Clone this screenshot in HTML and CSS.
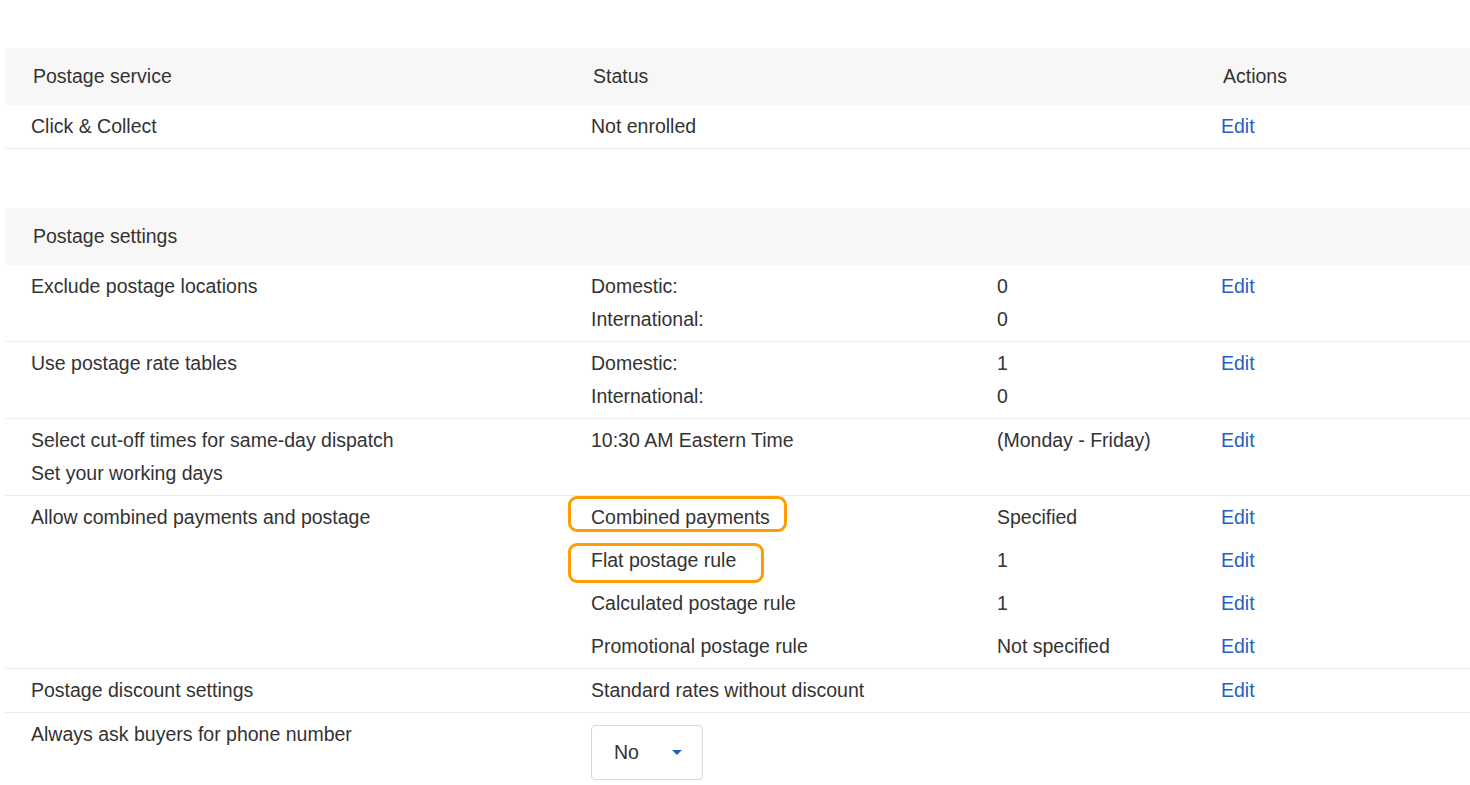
FILE: index.html
```html
<!DOCTYPE html>
<html lang="en">
<head>
<meta charset="utf-8">
<title>Postage</title>
<link rel="stylesheet" href="styles.css">
</head>
<body>
<div class="page">
  <section class="table">
    <div class="head">
      <div class="hcell">Postage service</div>
      <div class="hcell">Status</div>
      <div class="hcell"></div>
      <div class="hcell">Actions</div>
    </div>
    <div class="row">
      <div class="cell">Click &amp; Collect</div>
      <div class="cell">Not enrolled</div>
      <div class="cell"></div>
      <div class="cell"><a class="link" href="#">Edit</a></div>
    </div>
  </section>

  <section class="table second">
    <div class="head">
      <div class="hcell">Postage settings</div>
    </div>
    <div class="row">
      <div class="cell">Exclude postage locations</div>
      <div class="cell"><div>Domestic:</div><div>International:</div></div>
      <div class="cell"><div>0</div><div>0</div></div>
      <div class="cell"><a class="link" href="#">Edit</a></div>
    </div>
    <div class="row">
      <div class="cell">Use postage rate tables</div>
      <div class="cell"><div>Domestic:</div><div>International:</div></div>
      <div class="cell"><div>1</div><div>0</div></div>
      <div class="cell"><a class="link" href="#">Edit</a></div>
    </div>
    <div class="row">
      <div class="cell"><div>Select cut-off times for same-day dispatch</div><div>Set your working days</div></div>
      <div class="cell">10:30 AM Eastern Time</div>
      <div class="cell">(Monday - Friday)</div>
      <div class="cell"><a class="link" href="#">Edit</a></div>
    </div>
    <div class="row multi">
      <div class="cell span4">Allow combined payments and postage</div>
      <div class="cell"><span class="hl hl-combined">Combined payments</span></div>
      <div class="cell">Specified</div>
      <div class="cell"><a class="link" href="#">Edit</a></div>
      <div class="cell"><span class="hl hl-flat">Flat postage rule</span></div>
      <div class="cell">1</div>
      <div class="cell"><a class="link" href="#">Edit</a></div>
      <div class="cell">Calculated postage rule</div>
      <div class="cell">1</div>
      <div class="cell"><a class="link" href="#">Edit</a></div>
      <div class="cell">Promotional postage rule</div>
      <div class="cell">Not specified</div>
      <div class="cell"><a class="link" href="#">Edit</a></div>
    </div>
    <div class="row">
      <div class="cell">Postage discount settings</div>
      <div class="cell wide">Standard rates without discount</div>
      <div class="cell"><a class="link" href="#">Edit</a></div>
    </div>
    <div class="row last">
      <div class="cell">Always ask buyers for phone number</div>
      <div class="cell">
        <div class="select"><span>No</span><span class="caret"></span></div>
      </div>
      <div class="cell"></div>
      <div class="cell"></div>
    </div>
  </section>
</div>
</body>
</html>
```
FILE: styles.css
```css
html, body {
  margin: 0;
  padding: 0;
  background: #ffffff;
}
body {
  font-family: "Liberation Sans", Arial, sans-serif;
  font-size: 19.5px;
  color: #333333;
  line-height: 33px;
}
.page {
  padding: 48px 0 0 5px;
  overflow: hidden;
}
.table.second {
  margin-top: 59px;
}
.head, .row {
  display: grid;
  grid-template-columns: 560px 406px 224px 1fr;
}
.head {
  background: #f7f7f7;
  height: 57px;
  align-items: center;
}
.hcell {
  padding-left: 28px;
}
.row {
  border-bottom: 1px solid #ededed;
}
.row.last {
  border-bottom: none;
}
.cell {
  padding: 5px 0 5px 26px;
}
.cell.wide {
  grid-column: span 2;
}
.multi .span4 {
  grid-row: span 4;
}
.link {
  color: #1f62c4;
  text-decoration: none;
}
.hl {
  position: relative;
  display: inline-block;
}
.hl::after {
  content: "";
  position: absolute;
  border: 3px solid #ff9c00;
  border-radius: 9px;
}
.hl-combined::after {
  left: -23px;
  width: 213px;
  top: -5px;
  height: 30px;
}
.hl-flat::after {
  left: -23px;
  width: 190px;
  top: -1px;
  height: 34px;
}
.select {
  margin-top: 7px;
  width: 110px;
  height: 53px;
  border: 1px solid #d9d9d9;
  border-radius: 4px;
  box-sizing: content-box;
  display: flex;
  align-items: center;
  padding-left: 0;
}
.select span:first-child {
  padding-left: 22px;
  width: 58px;
}
.caret {
  width: 0;
  height: 0;
  border-left: 5px solid transparent;
  border-right: 5px solid transparent;
  border-top: 5px solid #1f62c4;
}
```
